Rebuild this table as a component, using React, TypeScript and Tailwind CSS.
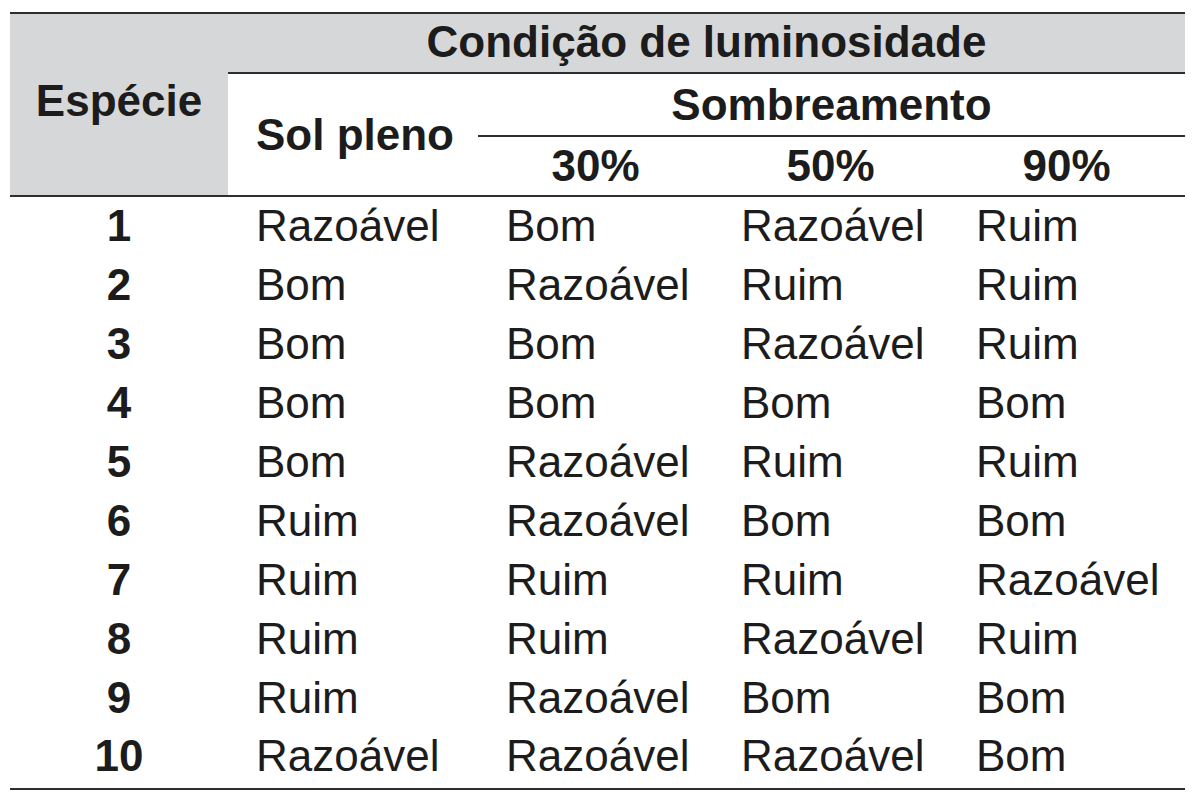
const rows: [string, string, string, string, string][] = [
  ['1', 'Razoável', 'Bom', 'Razoável', 'Ruim'],
  ['2', 'Bom', 'Razoável', 'Ruim', 'Ruim'],
  ['3', 'Bom', 'Bom', 'Razoável', 'Ruim'],
  ['4', 'Bom', 'Bom', 'Bom', 'Bom'],
  ['5', 'Bom', 'Razoável', 'Ruim', 'Ruim'],
  ['6', 'Ruim', 'Razoável', 'Bom', 'Bom'],
  ['7', 'Ruim', 'Ruim', 'Ruim', 'Razoável'],
  ['8', 'Ruim', 'Ruim', 'Razoável', 'Ruim'],
  ['9', 'Ruim', 'Razoável', 'Bom', 'Bom'],
  ['10', 'Razoável', 'Razoável', 'Razoável', 'Bom'],
];

export default function App() {
  return (
    <div className="w-[1200px] h-[799px] bg-white pt-[12px] pl-[10px] font-['Liberation_Sans',Arial,sans-serif] text-[#1c1c1c]">
      <table className="w-[1175px] table-fixed border-collapse text-[44px] leading-none">
        <colgroup>
          <col className="w-[218px]" />
          <col className="w-[250px]" />
          <col className="w-[235px]" />
          <col className="w-[235px]" />
          <col className="w-[237px]" />
        </colgroup>
        <thead>
          <tr className="h-[60px] border-t-2 border-[#2e2e2e]">
            <th
              rowSpan={3}
              className="bg-[#d6d7d9] border-b-2 border-[#2e2e2e] font-bold text-center align-middle pb-[8px]"
            >
              Espécie
            </th>
            <th colSpan={4} className="bg-[#d6d7d9] border-b-2 border-[#2e2e2e] font-bold text-center pb-[2px]">
              Condição de luminosidade
            </th>
          </tr>
          <tr className="h-[63px]">
            <th rowSpan={2} className="border-b-2 border-[#2e2e2e] font-bold text-left pl-[28px]">
              Sol pleno
            </th>
            <th colSpan={3} className="border-b-2 border-[#2e2e2e] font-bold text-center">
              Sombreamento
            </th>
          </tr>
          <tr className="h-[60px]">
            <th className="border-b-2 border-[#2e2e2e] font-bold text-center">30%</th>
            <th className="border-b-2 border-[#2e2e2e] font-bold text-center">50%</th>
            <th className="border-b-2 border-[#2e2e2e] font-bold text-center">90%</th>
          </tr>
        </thead>
        <tbody>
          {rows.map((r, i) => (
            <tr
              key={r[0]}
              className={i === rows.length - 1 ? 'h-[62px] border-b-2 border-[#2e2e2e]' : 'h-[59px]'}
            >
              <td className={i === rows.length - 1 ? 'font-bold text-center pb-[3px]' : 'font-bold text-center'}>{r[0]}</td>
              <td className={i === rows.length - 1 ? 'pl-[28px] pb-[3px]' : 'pl-[28px]'}>{r[1]}</td>
              <td className={i === rows.length - 1 ? 'pl-[28px] pb-[3px]' : 'pl-[28px]'}>{r[2]}</td>
              <td className={i === rows.length - 1 ? 'pl-[28px] pb-[3px]' : 'pl-[28px]'}>{r[3]}</td>
              <td className={i === rows.length - 1 ? 'pl-[28px] pb-[3px]' : 'pl-[28px]'}>{r[4]}</td>
            </tr>
          ))}
        </tbody>
      </table>
    </div>
  );
}
